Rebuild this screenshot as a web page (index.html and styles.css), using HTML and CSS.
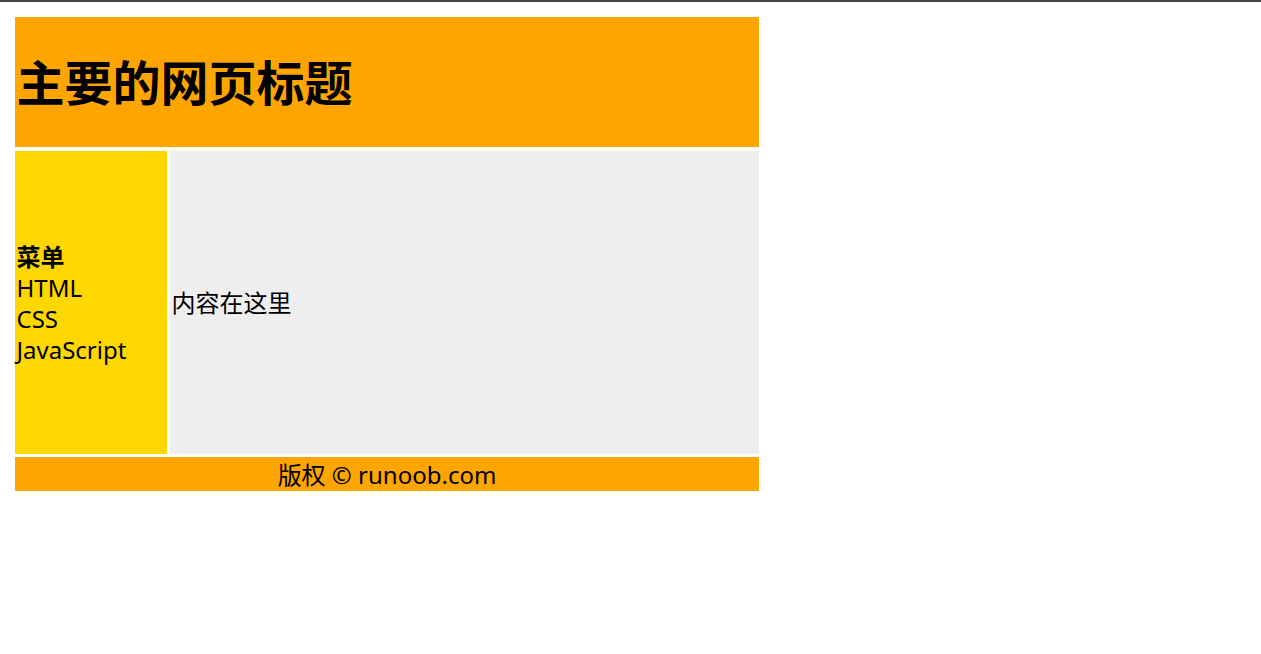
FILE: index.html
```html
<!DOCTYPE html>
<html lang="zh">
<head>
<meta charset="utf-8">
<title>布局</title>
<link rel="stylesheet" href="styles.css">
</head>
<body>
<div class="topline"></div>
<div class="page">
  <div class="layout">
    <div class="header"><h1 class="title">主要的网页标题</h1></div>
    <div class="menu">
      <div><b>菜单</b><br>HTML<br>CSS<br>JavaScript</div>
    </div>
    <div class="content">内容在这里</div>
    <div class="footer">版权 © runoob.com</div>
  </div>
</div>
</body>
</html>
```

FILE: styles.css
```css
html, body {
  margin: 0;
  padding: 0;
  background: #fff;
}
body {
  font-family: "Noto Sans", "Noto Sans CJK SC", sans-serif;
  font-size: 24px;
  line-height: 31px;
  color: #000;
}
.topline {
  height: 2px;
  background: #444;
}
.page {
  padding: 12px;
}
.layout {
  width: 744px;
  padding: 3px;
  display: grid;
  grid-template-columns: 152px 1fr;
  grid-template-rows: 131px 303px 34px;
  gap: 3px;
}
.header {
  grid-column: 1 / 3;
  height: 130px;
  box-sizing: border-box;
  align-self: start;
  background: #FFA500;
  padding: 1.5px;
  display: flex;
  align-items: center;
}
.title {
  margin: 0;
  font-size: 48px;
  line-height: 63px;
  font-weight: bold;
}
.menu {
  background: #FFD700;
  padding: 1.5px;
  display: flex;
  align-items: center;
}
.menu b {
  font-weight: bold;
}
.content {
  background: #EEEEEE;
  padding: 1.5px;
  display: flex;
  align-items: center;
}
.footer {
  grid-column: 1 / 3;
  background: #FFA500;
  padding: 1.5px;
  text-align: center;
}
```
